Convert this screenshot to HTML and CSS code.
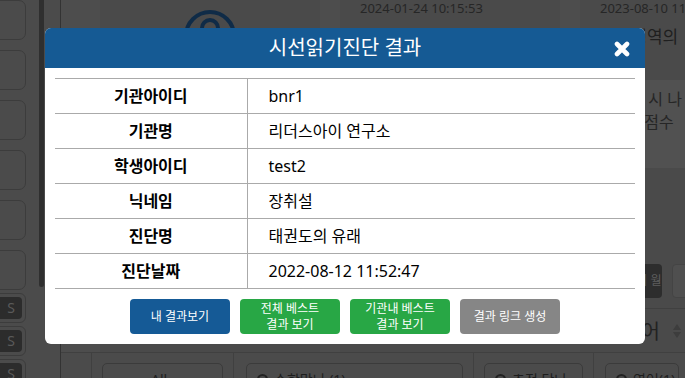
FILE: index.html
```html
<!DOCTYPE html>
<html lang="ko">
<head>
    <meta charset="utf-8">
    <title>시선읽기진단 결과</title>
    <link rel="stylesheet" href="styles.css">
</head>
<body>
    <div class="page">
        <aside class="side">
            <div class="side-list">
                <div class="tile"></div>
                <div class="tile"></div>
                <div class="tile"></div>
                <div class="tile"></div>
                <div class="tile"></div>
                <div class="tile"></div>
                <div class="tag"><span>S</span></div>
                <div class="tag"><span>S</span></div>
                <div class="tag"><span>S</span></div>
            </div>
            <div class="scroll"></div>
        </aside>

        <main class="main">
            <div class="cards">
                <div class="card card-logo">
                    <svg class="logo" width="56" height="56" viewBox="0 0 56 56">
                        <circle cx="28" cy="28" r="24" fill="none" stroke="#0f2b47" stroke-width="4"/>
                        <circle cx="28" cy="20" r="8" fill="none" stroke="#0f2b47" stroke-width="4"/>
                    </svg>
                </div>
                <div class="card">
                    <div class="card-date">2024-01-24 10:15:53</div>
                </div>
                <div class="card">
                    <div class="card-date">2023-08-10 11:08:21</div>
                    <div class="card-title">수리영역의</div>
                    <div class="card-desc">눈동자 시 나<br>독해력점수</div>
                    <div class="card-btns">
                        <span class="cbtn cbtn-dark">결과 보기 월</span>
                        <span class="cbtn cbtn-light">삭제</span>
                    </div>
                    <div class="card-select">
                        <span>국어</span>
                        <svg width="10" height="16" viewBox="0 0 10 16">
                            <path d="M5 1 L9 7 L1 7 Z M5 15 L9 9 L1 9 Z" fill="#3d3d3d"/>
                        </svg>
                    </div>
                </div>
            </div>

            <div class="filters">
                <div class="fcell fcell-all"><div class="fbox">All</div></div>
                <div class="fcell fcell-wide"><div class="fbox"><i class="dot"></i>수학맞나 (1)</div></div>
                <div class="fcell fcell-mid"><div class="fbox"><i class="dot"></i>초전 단나</div></div>
                <div class="fcell"><div class="fbox"><i class="dot"></i>영어(1)</div></div>
            </div>
        </main>
    </div>

    <div class="overlay">
        <div class="modal">
            <div class="modal-header">
                <span></span>
                <h2 class="modal-title">시선읽기진단 결과</h2>
                <button class="modal-close" type="button">
                    <svg width="16" height="16" viewBox="0 0 16 16">
                        <path d="M3 3 L13 13 M13 3 L3 13" stroke="#fff" stroke-width="4.6" stroke-linecap="round"/>
                    </svg>
                </button>
            </div>
            <div class="modal-body">
                <table class="result-table">
                    <tr><th>기관아이디</th><td>bnr1</td></tr>
                    <tr><th>기관명</th><td>리더스아이 연구소</td></tr>
                    <tr><th>학생아이디</th><td>test2</td></tr>
                    <tr><th>닉네임</th><td>장취설</td></tr>
                    <tr><th>진단명</th><td>태권도의 유래</td></tr>
                    <tr><th>진단날짜</th><td>2022-08-12 11:52:47</td></tr>
                </table>
                <div class="actions">
                    <button class="btn btn-blue" type="button">내 결과보기</button>
                    <button class="btn btn-green" type="button">전체 베스트<br>결과 보기</button>
                    <button class="btn btn-green" type="button">기관내 베스트<br>결과 보기</button>
                    <button class="btn btn-gray" type="button">결과 링크 생성</button>
                </div>
            </div>
        </div>
    </div>
</body>
</html>
```

FILE: styles.css
```css
* {
    box-sizing: border-box;
}

body {
    margin: 0;
    background-color: #4b4b4b;
    font-family: "Noto Sans", "Noto Sans CJK KR", sans-serif;
    overflow: hidden;
}

/* dimmed page behind the modal */

.page {
    display: flex;
    height: 378px;
    overflow: hidden;
}

.side {
    display: flex;
    flex: none;
    width: 61px;
    border-right: 1px solid #333;
}

.side-list {
    width: 39px;
    display: flex;
    flex-direction: column;
    overflow: hidden;
}

.tile {
    flex: none;
    width: 40px;
    height: 40px;
    margin-left: -14px;
    margin-bottom: 10px;
    border: 1px solid #3c3c3c;
    border-radius: 7px;
}

.tile:nth-child(6) {
    margin-bottom: 3px;
}

.tag {
    flex: none;
    width: 40px;
    height: 30px;
    margin-left: -14px;
    margin-bottom: 3px;
    padding: 3px;
    border: 1px solid #3c3c3c;
    border-radius: 6px;
}

.tag span {
    display: block;
    height: 100%;
    padding-right: 7px;
    background-color: #2c2c2c;
    border-radius: 4px;
    color: #5a5a5a;
    font-size: 14px;
    line-height: 22px;
    text-align: right;
}

.scroll {
    flex: none;
    width: 5px;
    height: 287px;
    background-color: #2f2f2f;
    border-radius: 0 0 3px 3px;
}

.main {
    flex: 1;
    min-width: 0;
    display: flex;
    flex-direction: column;
}

.cards {
    display: grid;
    grid-template-columns: 220px 220px 220px;
    column-gap: 20px;
    flex: none;
    height: 352px;
    padding-left: 39px;
    background-color: #4d4d4d;
}

.card {
    display: flex;
    flex-direction: column;
    background-color: #4a4a4a;
}

.card-logo {
    align-items: center;
}

.logo {
    margin-top: 8px;
}

.card-date {
    padding-left: 20px;
    font-size: 13px;
    line-height: 16px;
    color: #262626;
    white-space: nowrap;
}

.card-title {
    margin-top: 10px;
    padding-left: 20px;
    font-size: 17px;
    line-height: 22px;
    color: #1f1f1f;
    white-space: nowrap;
}

.card-desc {
    height: 88px;
    margin-top: 32px;
    padding: 8px 0 0 20px;
    background-color: #515151;
    font-size: 16px;
    line-height: 23px;
    color: #262626;
    white-space: nowrap;
}

.card-btns {
    display: flex;
    gap: 10px;
    margin-top: 96px;
    padding-left: 20px;
}

.cbtn {
    flex: none;
    height: 34px;
    border-radius: 4px;
    font-size: 12px;
    line-height: 34px;
    text-align: right;
    white-space: nowrap;
}

.cbtn-dark {
    width: 62px;
    padding-right: 4px;
    background-color: #2d2d2d;
    color: #5e5e5e;
}

.cbtn-light {
    width: 62px;
    background-color: #4f4f4f;
    border: 1px solid #444;
    color: #4f4f4f;
}

.card-select {
    display: flex;
    align-items: center;
    height: 44px;
    margin-top: 10px;
    padding-left: 43px;
    border-top: 1px solid #404040;
    font-size: 20px;
    color: #222;
}

.card-select svg {
    margin-left: 12px;
}

.filters {
    display: flex;
    flex: 1;
    padding-left: 30px;
    border-top: 1px solid #404040;
}

.fcell {
    flex: none;
    padding: 10px 10px 0 10px;
    border-left: 1px solid #404040;
}

.fcell-all {
    width: 142px;
}

.fcell-wide {
    width: 240px;
    padding-left: 12px;
}

.fcell-mid {
    width: 120px;
}

.fcell:last-child {
    flex: 1;
    padding-left: 11px;
    padding-right: 6px;
}

.fbox {
    height: 30px;
    padding: 6px 0 0 10px;
    border: 1px solid #3b3b3b;
    border-radius: 5px;
    font-size: 14px;
    line-height: 20px;
    color: #1e1e1e;
    white-space: nowrap;
    overflow: hidden;
}

.fcell-all .fbox {
    padding-left: 48px;
}

.dot {
    display: inline-block;
    width: 11px;
    height: 11px;
    margin-right: 6px;
    border: 2px solid #222;
    border-radius: 50%;
}

/* modal */

.overlay {
    position: fixed;
    inset: 0;
    display: flex;
    justify-content: center;
    align-items: flex-start;
    padding: 28px 0 0 5px;
}

.modal {
    width: 600px;
    background-color: #ffffff;
    border-radius: 6px;
    overflow: hidden;
}

.modal-header {
    display: grid;
    grid-template-columns: 1fr auto 1fr;
    align-items: center;
    height: 40px;
    padding: 0 15px;
    background-color: #155a94;
}

.modal-title {
    margin: 0;
    font-size: 20px;
    font-weight: 400;
    line-height: 28px;
    color: #fff;
}

.modal-close {
    justify-self: end;
    display: flex;
    width: 16px;
    height: 16px;
    padding: 0;
    margin-top: 1px;
    border: none;
    background: none;
    cursor: pointer;
}

.modal-body {
    padding: 10px;
}

.result-table {
    width: 100%;
    border-collapse: collapse;
    font-size: 16px;
    color: #000;
}

.result-table th,
.result-table td {
    height: 35px;
    padding: 0;
    border-top: 1px solid #aaa;
    border-bottom: 1px solid #aaa;
    line-height: 22px;
}

.result-table th {
    width: 192px;
    border-right: 1px solid #aaa;
    font-weight: 700;
    text-align: center;
}

.result-table td {
    padding-left: 21px;
    text-align: left;
}

.actions {
    display: flex;
    justify-content: center;
    gap: 10px;
    margin-top: 10px;
}

.btn {
    width: 100px;
    height: 35px;
    padding: 0;
    border: none;
    border-radius: 4px;
    color: #fff;
    font-family: inherit;
    font-size: 12px;
    line-height: 16px;
    cursor: pointer;
}

.btn-blue {
    background-color: #155a96;
}

.btn-green {
    background-color: #28a745;
}

.btn-gray {
    background-color: #868686;
}
```
